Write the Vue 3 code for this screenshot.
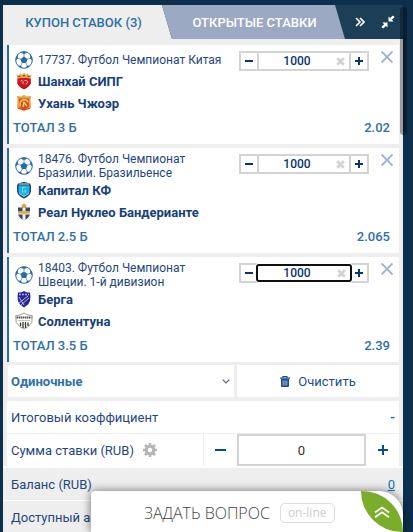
<script setup>
import { ref } from 'vue'

const bets = ref([
  {
    id: 1,
    league: '17737. Футбол Чемпионат Китая',
    teams: [{ name: 'Шанхай СИПГ', crest: 'shanghai' }, { name: 'Ухань Чжоэр', crest: 'wuhan' }],
    market: 'ТОТАЛ 3 Б',
    odds: '2.02',
    stake: 1000,
    active: false,
  },
  {
    id: 2,
    league: '18476. Футбол Чемпионат Бразилии. Бразильенсе',
    teams: [{ name: 'Капитал КФ', crest: 'capital' }, { name: 'Реал Нуклео Бандерианте', crest: 'real' }],
    market: 'ТОТАЛ 2.5 Б',
    odds: '2.065',
    stake: 1000,
    active: false,
  },
  {
    id: 3,
    league: '18403. Футбол Чемпионат Швеции. 1-й дивизион',
    teams: [{ name: 'Берга', crest: 'berga' }, { name: 'Соллентуна', crest: 'sollentuna' }],
    market: 'ТОТАЛ 3.5 Б',
    odds: '2.39',
    stake: 1000,
    active: true,
  },
])
const total = ref(0)
const mode = ref('single')

function step(bet, delta) {
  bet.stake = Math.max(0, Number(bet.stake) + delta)
}
function remove(id) {
  bets.value = bets.value.filter((b) => b.id !== id)
}
</script>

<template>
  <main class="coupon">
    <header class="head">
      <button class="tab tab-active" type="button">КУПОН СТАВОК ({{ bets.length }})</button>
      <button class="tab tab-open" type="button">ОТКРЫТЫЕ СТАВКИ</button>
      <div class="tools">
        <button class="tool" type="button" aria-label="Свернуть">
          <svg width="10" height="10" viewBox="0 0 10 10"><path d="M1 1l4 4-4 4M5 1l4 4-4 4" fill="none" stroke="#fff" stroke-width="1.700" /></svg>
        </button>
        <button class="tool" type="button" aria-label="Уменьшить">
          <svg width="14" height="14" viewBox="0 0 14 14" fill="#fff">
            <path d="M7.500 6.500V1.400l1.600 1.600L11.900.4l1.700 1.700-2.700 2.700 1.700 1.700z" />
            <path d="M6.500 7.500v5.100L4.900 11l-2.800 2.600L.4 11.900l2.700-2.700-1.700-1.700z" />
          </svg>
        </button>
      </div>
    </header>

    <section class="bets">
      <article v-for="bet in bets" :key="bet.id" class="bet">
        <div class="info">
          <div class="league">
            <svg class="ball" width="18" height="18" viewBox="0 0 18 18">
              <circle cx="9" cy="9" r="8.300" fill="#fff" stroke="#2b6ba5" stroke-width="1" />
              <path d="M9 5.500l3.500 2.600-1.300 4H6.800l-1.300-4zM5.600 1.500L9 3.200l3.400-1.700L9 .6zM.7 9.500L3 7.300l-.3-3.500L1 6.300zM17.300 9.500L15 7.300l.3-3.500L17 6.300zM3 14.700l3-.2 1.200 2.700-2.200-.6zM15 14.700l-3-.2-1.200 2.700 2.200-.6z" fill="#2b6ba5" />
              <path d="M9 3v3M3 7.300l3 1M15 7.300l-3 1M6 14.500l1-2.500M12 14.500L11 12" stroke="#2b6ba5" stroke-width=".6" />
            </svg>
            <span>{{ bet.league }}</span>
          </div>
          <div v-for="team in bet.teams" :key="team.name" class="team">
            <svg class="crest" width="18" height="18" viewBox="0 0 18 18" aria-hidden="true">
              <g v-if="team.crest === 'shanghai'">
                <path d="M2.500 6h13.200l.3 5Q14 15.500 9 17.300 4 15.500 2.200 11z" fill="#d0161d" />
                <path d="M1.500 2.500L4 3.300l1.500-2L7 3 9 .5 11 3l1.500-1.700 1.500 2 2.500-.8-1 4.300Q9 4.800 2.500 6.800z" fill="#d9a650" />
                <path d="M3.500 4.500h2M8 3.800h2M12.500 4.500h2" stroke="#b03a24" stroke-width="1.200" />
                <path d="M5.500 9q2-1.500 2.500.5t-.5 2.500M9.500 8.500q3-.8 3 1.500t-2 2" fill="none" stroke="#f5a9a0" stroke-width="1" />
                <path d="M2.800 11Q5 15 9 16.500q4-1.500 6.200-5.500" fill="none" stroke="#a30e16" />
              </g>
              <g v-else-if="team.crest === 'wuhan'">
                <path d="M2 2l4 .5L9 1l3 1.500L16 2l-.5 4 .5 8-4 1.500L9 17.500l-3-2L2 14l.5-8z" fill="#e5a33d" />
                <path d="M4 4.500h10V13l-5 3-5-3z" fill="#dc4a2b" />
                <path d="M5 12.500q-.5-6.500 4-7 3.500 0 4 3" fill="none" stroke="#f5cf5c" stroke-width="1.500" />
                <path d="M8 13l1-4.500 3 3.500" fill="none" stroke="#f5cf5c" stroke-width="1.500" />
                <path d="M3 14.500q6 2 12 0" fill="none" stroke="#c43b24" />
              </g>
              <g v-else-if="team.crest === 'capital'">
                <path d="M3 2.500L9 .8l6 1.700 1 2v6Q15 15 9 17.500 3 15 2 10.500v-6z" fill="#26475f" />
                <path d="M3.500 4.500h11v6Q13.500 14 9 15.700 4.500 14 3.500 10.500z" fill="#18b5e6" />
                <path d="M4 3h10" stroke="#c5dbe0" stroke-width="1" />
                <path d="M10.500 6.500H7.500v4.500h3V9H9.500" fill="none" stroke="#7fdcf5" stroke-width=".8" />
                <path d="M4 12l5 3.500 5-3.500" fill="none" stroke="#afd8df" stroke-width=".8" />
              </g>
              <g v-else-if="team.crest === 'real'">
                <path d="M6.500 2L9 .5 11.500 2 11 5H7z" fill="#e7a52d" />
                <path d="M3 4.500h12V11q-1 4-6 6.500Q4 15 3 11z" fill="#34486f" />
                <path d="M7.500 4.500h3v4H15v3h-4.500V17L9 17.700 7.500 17v-5.500H3v-3h4.500z" fill="#f2f1e9" />
                <path d="M3 8.500h12l-.5 2h-11z" fill="#e7a52d" />
                <circle cx="9" cy="9.500" r="2" fill="#dfab46" />
              </g>
              <g v-else-if="team.crest === 'berga'">
                <path d="M3 2.500q3 .5 6-1.500 3 2 6 1.500 1.500 8-2 12L9 17.500l-4-3q-3.500-4-2-12z" fill="#28249a" />
                <path d="M4 4.500h10" stroke="#b5b4df" stroke-width="1.300" stroke-dasharray="2 1" />
                <path d="M4 13l9-7M6 15l8-7M4 7l5 8" fill="none" stroke="#c2c2df" stroke-width=".9" />
              </g>
              <g v-else>
                <path d="M.7 3.500L5 3l4-2 4 2 4.300.5-.5 7Q14 15 9 17.200 4 15 1.200 10.500z" fill="#fff" stroke="#a09c85" stroke-width="1" />
                <path d="M1.500 5.500h15" stroke="#55544c" stroke-width="2" stroke-dasharray="1.500 .5" />
                <path d="M3 8.500h12" stroke="#b4b4a4" stroke-width=".8" />
                <path d="M5.500 10.500v3.500M8 10v6M10.500 10v6M13 10.500v3.500" stroke="#333" stroke-width="1.300" />
              </g>
            </svg>
            <span>{{ team.name }}</span>
          </div>
        </div>
        <div class="stepper">
          <button type="button" aria-label="Меньше" @click="step(bet, -100)">
            <svg width="8" height="8" viewBox="0 0 8 8"><path d="M0 4h8" stroke="#0b3478" stroke-width="2" /></svg>
          </button>
          <div class="stake" :class="{ focused: bet.active }">
            <input v-model="bet.stake" type="text" aria-label="Сумма">
            <button class="wipe" type="button" aria-label="Стереть" @click="bet.stake = 0">
              <svg width="9" height="9" viewBox="0 0 9 9"><path d="M1.200 1.200l6.600 6.600M7.800 1.200L1.200 7.800" stroke="#d2d2d2" stroke-width="2.800" /></svg>
            </button>
          </div>
          <button type="button" aria-label="Больше" @click="step(bet, 100)">
            <svg width="8" height="8" viewBox="0 0 8 8"><path d="M0 4h8M4 0v8" stroke="#0b3478" stroke-width="2" /></svg>
          </button>
        </div>
        <button class="close" type="button" aria-label="Удалить" @click="remove(bet.id)">
          <svg width="12" height="12" viewBox="0 0 12 12"><path d="M.5.5l11 11M11.500.5l-11 11" stroke="#9fb0cf" stroke-width="1.900" /></svg>
        </button>
        <div class="outcome"><span>{{ bet.market }}</span><span>{{ bet.odds }}</span></div>
      </article>
    </section>

    <section class="actions">
      <div class="kind">
        <select v-model="mode" aria-label="Тип ставки">
          <option value="single">Одиночные</option>
          <option value="express">Экспресс</option>
        </select>
        <svg class="arrow" width="8" height="5" viewBox="0 0 8 5"><path d="M.7.7L4 4 7.300.7" fill="none" stroke="#54677e" stroke-width="1.200" /></svg>
      </div>
      <button class="clear" type="button" @click="bets = []">
        <svg width="10" height="11" viewBox="0 0 10 11">
          <path d="M3 1.500V.5h4v1M0 2.200h10" fill="none" stroke="#1d4f8f" stroke-width="1.200" />
          <path d="M1 3h8v7q0 1-1 1H2q-1 0-1-1z" fill="#1d4f8f" />
          <path d="M3.200 4.500v5M5 4.500v5M6.800 4.500v5" stroke="#fff" stroke-width=".6" />
        </svg>
        Очистить
      </button>
    </section>

    <section class="summary">
      <div class="row"><span>Итоговый коэффициент</span><b class="dash">-</b></div>
      <div class="row sum">
        <label class="sum-label" for="total">Сумма ставки (RUB)
          <svg width="14" height="14" viewBox="0 0 14 14">
            <circle cx="7" cy="7" r="3.800" fill="none" stroke="#b5b5b5" stroke-width="3" />
            <path d="M7 0v2.500M7 11.500V14M0 7h2.500M11.500 7H14M2 2l2 2M10 10l2 2M2 12l2-2M10 4l2-2" stroke="#b5b5b5" stroke-width="2.600" />
          </svg>
        </label>
        <button type="button" aria-label="Уменьшить сумму" @click="total = Math.max(0, total - 1)">
          <svg width="11" height="10" viewBox="0 0 11 10"><path d="M0 5h11" stroke="#0b4a8c" stroke-width="2" /></svg>
        </button>
        <input id="total" v-model.number="total" type="text">
        <button type="button" aria-label="Увеличить сумму" @click="total++">
          <svg width="10" height="10" viewBox="0 0 10 10"><path d="M0 5h10M5 0v10" stroke="#0b4a8c" stroke-width="2" /></svg>
        </button>
      </div>
    </section>
    <section class="funds">
      <div class="row"><span>Баланс (RUB)</span><a href="#">0</a></div>
      <div class="row"><span>Доступный аванс</span></div>
    </section>

    <div class="scroll"></div>

    <aside class="chat">
      <span class="ask">ЗАДАТЬ ВОПРОС</span>
      <span class="online">on-line</span>
      <button class="leaf" type="button" aria-label="Открыть чат">
        <svg width="16" height="12" viewBox="0 0 16 12"><path d="M1 6.500l7-5 7 5M1 11.200l7-5 7 5" fill="none" stroke="#fff" stroke-width="1.700" /></svg>
      </button>
    </aside>
  </main>
</template>

<style>
body {
  margin: 0;
  background: #0c2f4c;
}
</style>

<style scoped>
* {
  box-sizing: border-box;
}
button,
input,
select {
  margin: 0;
  padding: 0;
  border: 0;
  border-radius: 0;
  background: none;
  font: inherit;
  color: inherit;
}
button {
  display: flex;
  align-items: center;
  justify-content: center;
  cursor: pointer;
}
svg {
  display: block;
  flex: none;
}
.coupon {
  position: relative;
  height: 100vh;
  overflow: hidden;
  padding: 5px 10px 0 3px;
  font-family: Roboto, sans-serif;
  font-size: 13px;
  color: #1f477f;
}
.head {
  display: flex;
  height: 34px;
  background: #1c3f57;
}
.tab {
  font-weight: 500;
}
.tab-active {
  flex: 0 0 169px;
  padding-right: 8px;
  margin-right: -9px;
  background: #eee;
  color: #2c6ea8;
  clip-path: polygon(0 0, calc(100% - 10px) 0, 100% 100%, 0 100%);
}
.tab-open {
  flex: 1;
  margin-left: -1px;
  padding-left: 2px;
  color: #fff;
  background: #9ba9c2;
  clip-path: polygon(0 0, calc(100% - 10px) 0, 100% 100%, 10px 100%);
}
.tools {
  display: flex;
  flex: 0 0 58px;
  align-items: center;
  justify-content: space-between;
  padding: 0 8px 0 10px;
}
.bets {
  display: flex;
  flex-direction: column;
  gap: 4px;
  padding: 6px 4px 3px;
  background: #eee;
}
.bet {
  display: grid;
  grid-template-columns: 1fr 130px 30px;
  align-items: start;
  padding: 4px 0 3px;
  border-left: 2px solid #2b6ba5;
  background: #fff;
}
.info {
  padding-left: 6px;
}
.league,
.team {
  display: flex;
  align-items: center;
  gap: 5px;
  min-height: 22px;
}
.league {
  padding-right: 16px;
  font-size: 12px;
  line-height: 14px;
}
.ball,
.crest {
  width: 18px;
}
.team {
  padding-bottom: 2px;
  font-weight: 700;
  color: #17407b;
}
.stepper {
  display: flex;
  height: 20px;
  margin-top: 2px;
  border: 2px solid #d3d3d3;
  color: #0b3478;
}
.stepper > button {
  flex: 0 0 16px;
}
.stake {
  display: flex;
  flex: 1;
  align-items: center;
  border: solid #d3d3d3;
  border-width: 0 2px;
}
.stake input {
  flex: 1;
  width: 0;
  height: 16px;
  padding-left: 2px;
  text-align: center;
  font-size: 12px;
  font-weight: 500;
  outline: 0;
}
.wipe {
  flex: 0 0 16px;
  padding-right: 2px;
}
.focused {
  z-index: 1;
  margin: -1px;
  border: 2px solid #101010;
  border-radius: 3px;
  background: #fff;
  box-shadow: 0 0 0 1px #fff;
}
.close {
  justify-self: end;
  margin: 2px 6px 0 0;
}
.outcome {
  grid-column: 1 / -1;
  display: flex;
  justify-content: space-between;
  padding: 0 9px 0 4px;
  line-height: 26px;
  font-weight: 500;
  color: #2e70aa;
}
.actions {
  display: flex;
  gap: 3px;
  padding: 0 4px 4px 5px;
  height: 36px;
  background: #eee;
}
.kind,
.clear {
  background: #fff;
}
.kind {
  position: relative;
  flex: 226 1 0;
}
.kind select {
  appearance: none;
  width: 100%;
  height: 100%;
  padding-left: 3px;
  font-weight: 700;
  color: #2e70aa;
}
.arrow {
  position: absolute;
  right: 4px;
  top: 14px;
}
.clear {
  flex: 162 1 0;
  gap: 8px;
  color: #1d4f8f;
}
.summary {
  padding: 0 4px;
  background: #eee;
}
.row {
  display: flex;
  align-items: center;
  justify-content: space-between;
  height: 32px;
  padding: 0 4px;
  background: #fff;
}
.dash {
  color: #0b74c9;
}
.sum {
  margin-top: 1px;
  padding-right: 0;
}
.sum-label {
  display: flex;
  flex: 1;
  align-items: center;
  gap: 9px;
  height: 100%;
  border-right: 1px solid #eee;
}
.sum button {
  flex: 0 0 33px;
  height: 100%;
}
.sum input {
  width: 129px;
  height: 32px;
  border: 2px solid #d3d3d3;
  text-align: center;
  color: #333;
}
.funds {
  border-top: 2px solid #fff;
  background: #eee;
}
.funds .row {
  padding: 0 8px;
  border-bottom: 1px solid #fff;
  height: 33px;
  background: none;
}
.funds a {
  color: #0b74c9;
}
.scroll {
  position: absolute;
  top: 7px;
  right: 6px;
  width: 7px;
  height: 128px;
  border-radius: 4px;
  background: rgba(0, 0, 0, 0.35);
}
.chat {
  position: absolute;
  right: 10px;
  bottom: 0;
  left: 91px;
  display: flex;
  align-items: center;
  height: 41px;
  padding-left: 53px;
  border-radius: 4px 24px 0 0;
  background: #fff;
  box-shadow: 0 0 10px rgba(0, 0, 0, 0.55);
  font-family: "Open Sans", sans-serif;
  color: #666;
}
.ask {
  margin-top: 2px;
  font-size: 16px;
  font-weight: 300;
  color: #444;
}
.online {
  margin: 2px 0 0 10px;
  padding: 0 7px;
  border: 1px solid #ddd;
  border-radius: 5px;
  font-size: 12px;
  line-height: 18px;
  color: #ccc;
}
.leaf {
  width: 42px;
  height: 41px;
  margin-left: auto;
  border-radius: 0 42px 0 42px;
  background: #7aae2a;
}
</style>
